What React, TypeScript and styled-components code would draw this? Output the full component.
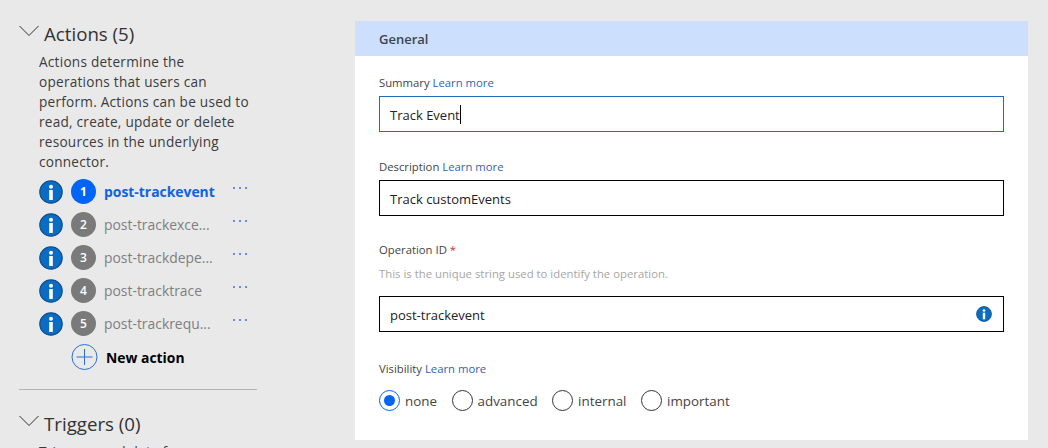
import type { FC } from 'react'
import styled, { createGlobalStyle } from 'styled-components'

const actions = ['post-trackevent', 'post-trackexce...', 'post-trackdepe...', 'post-tracktrace', 'post-trackrequ...']
const visibility = ['none', 'advanced', 'internal', 'important']
const actionsHelp = [
	'Actions determine the',
	'operations that users can',
	'perform. Actions can be used to',
	'read, create, update or delete',
	'resources in the underlying',
	'connector.',
]

const InfoIcon: FC<{ size: number }> = ({ size }) => (
	<svg width={size} height={size} viewBox="0 0 24 24">
		<circle cx="12" cy="12" r="11.2" fill="#0a6cc2" stroke="#10508c" strokeWidth="1.2" />
		<circle cx="12" cy="6.8" r="2" fill="#fff" />
		<rect x="10.2" y="10" width="3.6" height="10" fill="#fff" />
	</svg>
)

const Chevron: FC = () => (
	<svg width="20" height="12" viewBox="0 0 20 12">
		<path d="M0.5 1 L10 10.5 L19.5 1" fill="none" stroke="#333" strokeWidth="1" />
	</svg>
)

const PlusIcon: FC = () => (
	<svg width="28" height="26" viewBox="0 0 28 26">
		<circle cx="13.5" cy="13" r="12.5" fill="none" stroke="#2b6fd8" strokeWidth="1" />
		<path d="M13.5 5 V21 M5.5 13 H21.5" stroke="#2b6fd8" strokeWidth="1" fill="none" />
	</svg>
)

const DotsIcon: FC = () => (
	<svg width="16" height="4" viewBox="0 0 16 4">
		<circle cx="2" cy="2" r="1" fill="#3b6fcf" />
		<circle cx="8" cy="2" r="1" fill="#3b6fcf" />
		<circle cx="14" cy="2" r="1" fill="#3b6fcf" />
	</svg>
)

const App: FC = () => (
	<>
		<GlobalStyle />
		<Page>
			<Sidebar>
				<SectionTitle>
					<Chevron />
					<span>Actions (5)</span>
				</SectionTitle>
				<Description>
					{actionsHelp.map(line => (
						<div key={line}>{line}</div>
					))}
				</Description>
				<ActionList>
					{actions.map((name, i) => (
						<ActionRow key={name}>
							<InfoIcon size={24} />
							<NumberBadge $active={i === 0}>{i + 1}</NumberBadge>
							<ActionName $active={i === 0}>{name}</ActionName>
							<Dots>
								<DotsIcon />
							</Dots>
						</ActionRow>
					))}
				</ActionList>
				<NewAction>
					<PlusIcon />
					<span>New action</span>
				</NewAction>
				<Divider />
				<SectionTitle>
					<Chevron />
					<span>Triggers (0)</span>
				</SectionTitle>
				<Description>Triggers read data from</Description>
			</Sidebar>
			<Panel>
				<PanelHeader>General</PanelHeader>
				<PanelBody>
					<Field $height={84}>
						<Label>
							Summary <LearnMore>Learn more</LearnMore>
						</Label>
						<InputBox $focused>
							Track Event
							<Caret />
						</InputBox>
					</Field>
					<Field $height={83}>
						<Label>
							Description <LearnMore>Learn more</LearnMore>
						</Label>
						<InputBox>Track customEvents</InputBox>
					</Field>
					<Field $height={0}>
						<Label>
							Operation ID <Required>*</Required>
						</Label>
						<Hint>This is the unique string used to identify the operation.</Hint>
						<InputBox>
							post-trackevent
							<InfoSlot>
								<InfoIcon size={16} />
							</InfoSlot>
						</InputBox>
					</Field>
					<VisibilityLabel>
						Visibility <LearnMore>Learn more</LearnMore>
					</VisibilityLabel>
					<RadioRow>
						{visibility.map((option, i) => (
							<RadioOption key={option}>
								<RadioCircle $checked={i === 0} />
								{option}
							</RadioOption>
						))}
					</RadioRow>
				</PanelBody>
			</Panel>
		</Page>
	</>
)

export default App

const GlobalStyle = createGlobalStyle`
	html, body {
		margin: 0;
		padding: 0;
		height: 448px;
		overflow: hidden;
		background: #e9e9e9;
	}
	body {
		font-family: 'Open Sans', 'Noto Sans', sans-serif;
	}
`

const Page = styled.div`
	display: flex;
	align-items: flex-start;
	height: 448px;
	overflow: hidden;
	padding: 21px 20px 0 19px;
	box-sizing: border-box;
`

const Sidebar = styled.div`
	width: 238px;
	margin-right: 98px;
	flex-shrink: 0;
`

const SectionTitle = styled.div`
	display: flex;
	align-items: center;
	gap: 5px;
	height: 25px;
	color: #333;
	font-size: 18.7px;

	svg {
		margin-top: -6px;
	}
`

const Description = styled.div`
	margin: 6px 0 0 20px;
	color: #3c3c3c;
	font-size: 13.6px;
	letter-spacing: 0.25px;
	line-height: 20px;
	white-space: nowrap;
`

const ActionList = styled.div`
	display: flex;
	flex-direction: column;
	gap: 8px;
	margin: 7px 0 0 20px;
`

const ActionRow = styled.div`
	display: flex;
	align-items: center;
	height: 25px;
`

const NumberBadge = styled.div<{ $active: boolean }>`
	width: 25px;
	height: 25px;
	margin-left: 8px;
	border-radius: 50%;
	background: ${p => (p.$active ? '#0064f5' : '#7a7a7a')};
	color: #fff;
	font-size: 12px;
	font-weight: ${p => (p.$active ? 700 : 600)};
	display: flex;
	align-items: center;
	justify-content: center;
`

const ActionName = styled.div<{ $active: boolean }>`
	width: 128px;
	margin-left: 8px;
	color: ${p => (p.$active ? '#0f62e0' : '#7f7f7f')};
	font-size: 13.9px;
	font-weight: ${p => (p.$active ? 700 : 400)};
	white-space: nowrap;
`

const Dots = styled.div`
	display: flex;
	margin-top: -7px;
`

const NewAction = styled.div`
	display: flex;
	align-items: center;
	gap: 7px;
	height: 26px;
	margin: 8px 0 0 52px;
	color: #000;
	font-size: 13.9px;
	font-weight: 700;
`

const Divider = styled.div`
	height: 1px;
	margin: 19px 0 21px;
	background: #b4b4b4;
`

const Panel = styled.div`
	flex: 1;
	height: 419px;
	background: #fff;
`

const PanelHeader = styled.div`
	display: flex;
	align-items: center;
	height: 35px;
	padding-left: 24px;
	background: #cce0fd;
	color: #3a4450;
	font-size: 13px;
	font-weight: 600;
`

const PanelBody = styled.div`
	padding: 19px 24px 0;
`

const Field = styled.div<{ $height: number }>`
	height: ${p => (p.$height ? `${p.$height}px` : 'auto')};
`

const Label = styled.div`
	height: 21px;
	color: #444;
	font-size: 11.3px;
	line-height: 16px;
`

const LearnMore = styled.span`
	color: #2f63c0;
`

const Required = styled.span`
	color: #c33;
`

const Hint = styled.div`
	height: 30px;
	margin-top: 3px;
	color: #a6a6a6;
	font-size: 11.3px;
	letter-spacing: 0.02px;
	line-height: 16px;
`

const InputBox = styled.div<{ $focused?: boolean }>`
	position: relative;
	display: flex;
	align-items: center;
	height: 36px;
	box-sizing: border-box;
	padding: 2px 0 0 10px;
	border: 1px solid ${p => (p.$focused ? '#1f6dbd' : '#000')};
	color: #222;
	font-size: 13px;
`

const Caret = styled.span`
	width: 1px;
	height: 19px;
	margin-top: -2px;
	background: #000;
`

const InfoSlot = styled.span`
	position: absolute;
	right: 11px;
	top: 9px;
	display: flex;
`

const VisibilityLabel = styled(Label)`
	margin-top: 29px;
	height: 20px;
`

const RadioRow = styled.div`
	display: flex;
	align-items: center;
	margin-top: 9px;
	gap: 14.5px;
`

const RadioOption = styled.div`
	display: flex;
	align-items: center;
	gap: 5px;
	color: #444;
	font-size: 13.4px;
`

const RadioCircle = styled.span<{ $checked: boolean }>`
	position: relative;
	width: 21px;
	height: 21px;
	box-sizing: border-box;
	border-radius: 50%;
	border: 1px solid ${p => (p.$checked ? '#0064f5' : '#333')};

	&::after {
		content: '';
		display: ${p => (p.$checked ? 'block' : 'none')};
		position: absolute;
		inset: 4px;
		border-radius: 50%;
		background: #0064f5;
	}
`
